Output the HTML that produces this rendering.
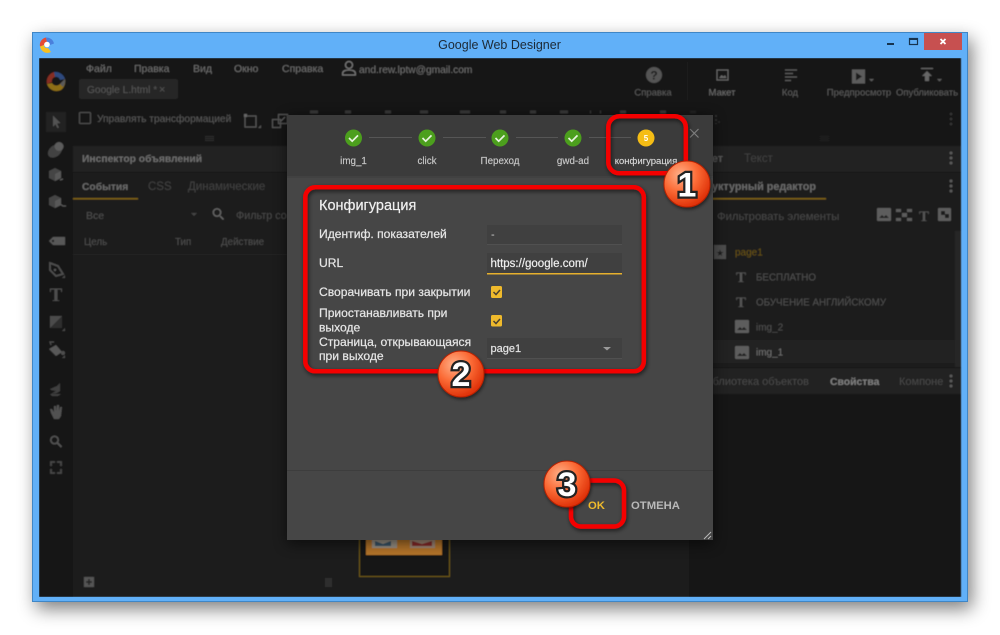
<!DOCTYPE html>
<html><head><meta charset="utf-8"><style>
html,body{margin:0;padding:0;background:#fff;width:1000px;height:635px;overflow:hidden}
svg{display:block}
text{font-family:"Liberation Sans",sans-serif;font-size:11px;fill:#666}
.m{fill:#6e6e6e;font-size:10.5px}
.d{fill:#5c5c5c;font-size:9.5px;text-anchor:middle}
.b{font-weight:bold}
.l{fill:#e6e6e6;font-size:12.1px;stroke:#e6e6e6;stroke-width:.22px}
.s{fill:#c8c8c8;font-size:9.8px;text-anchor:middle;stroke:#c8c8c8;stroke-width:.15px}
.dg{font-size:34px;font-weight:bold;fill:#fff;stroke:#222;stroke-width:4.5px;paint-order:stroke;text-anchor:middle}
.rb{fill:none;stroke:#f40000;stroke-width:4.5px}
.ser{font-family:"Liberation Serif",serif;font-weight:bold;text-anchor:middle}
</style></head><body>
<svg width="1000" height="635" viewBox="0 0 1000 635" xmlns="http://www.w3.org/2000/svg">
<defs>
<filter id="ws" x="-10%" y="-10%" width="120%" height="125%"><feGaussianBlur stdDeviation="9"/></filter>
<filter id="soft" x="0" y="0" width="100%" height="100%"><feGaussianBlur stdDeviation=".45"/></filter>
<filter id="ds" x="-10%" y="-10%" width="120%" height="120%"><feGaussianBlur stdDeviation="7"/></filter>
<filter id="rs" x="-20%" y="-20%" width="140%" height="140%"><feDropShadow dx="1" dy="2" stdDeviation="2" flood-color="#000" flood-opacity=".6"/></filter>
<filter id="bs" x="-20%" y="-20%" width="140%" height="140%"><feDropShadow dx="1" dy="2" stdDeviation="1.5" flood-color="#000" flood-opacity=".5"/></filter>
<radialGradient id="bg" cx="35%" cy="30%" r="75%"><stop offset="0" stop-color="#ffb088"/><stop offset=".5" stop-color="#fb6a35"/><stop offset="1" stop-color="#dc2c04"/></radialGradient>
<g id="img"><rect width="14" height="13" rx="1" fill="#5d5d5d"/><path d="M2 10l3-3 2 2 2-2 3 3z" fill="#1e1e1e"/></g>
<g id="vd"><circle cx="0" cy="-5" r="1.5" fill="#5a5a5a"/><circle cx="0" cy="0" r="1.5" fill="#5a5a5a"/><circle cx="0" cy="5" r="1.5" fill="#5a5a5a"/></g>
<g id="ok"><circle r="8.5" fill="#4c9f1d"/><path d="M-4.5 0l3.2 3.2 5.8-5.8" fill="none" stroke="#e8f3df" stroke-width="1.7"/></g>
</defs>

<!-- window -->
<rect x="36" y="39" width="936" height="570" fill="#000" opacity=".5" filter="url(#ws)"/>
<rect x="32.500" y="32.500" width="935" height="569" fill="#61b0f8" stroke="#3f86c6"/>

<!-- titlebar -->
<text x="499.500" y="49" style="font-size:12.5px;fill:#1d2a36;text-anchor:middle">Google Web Designer</text>
<g transform="translate(47,44.500)"><path d="M-7 2a7.500 7.500 0 0 1 6-9l1 4.500a3 3 0 0 0-3 3z" fill="#e54b35"/><path d="M-1-7a7.500 7.500 0 0 1 8 6l-4 1.500a3 3 0 0 0-3-3z" fill="#4a80dc"/><path d="M-7 2l4-1.500a3 3 0 0 0 4 3l3 4a7.500 7.500 0 0 1-11-5.500z" fill="#f7bf1f"/><circle r="2.800" fill="#fff"/></g>
<rect x="887" y="43" width="7" height="2" fill="#17344f"/>
<rect x="909.500" y="38.500" width="8" height="6" fill="none" stroke="#17344f" stroke-width="1.200"/><rect x="909" y="38" width="9" height="2" fill="#17344f"/>
<rect x="924" y="33" width="38" height="17" fill="#c75050"/>
<path d="M940.500 39l5 5m0-5l-5 5" stroke="#fff" stroke-width="1.800"/>

<g filter="url(#soft)">
<rect x="39" y="58" width="922" height="539" fill="#1b1b1b"/>
<!-- app top -->
<rect x="39" y="58" width="922" height="47" fill="#141414"/>
<rect x="39" y="105" width="922" height="41" fill="#171717"/>
<g transform="translate(56,81)" opacity=".6"><path d="M-9 3a10 10 0 0 1 7-12l1 5a4 4 0 0 0-3 5z" fill="#d2402c"/><path d="M-2-9a10 10 0 0 1 11 7l-5 1a4 4 0 0 0-5-3z" fill="#3f6fc3"/><path d="M-9 3l5-1a5 5 0 0 0 8 1l5-5a11 11 0 0 1-4 11 10 10 0 0 1-14-6z" fill="#e0aa1c"/><path d="M4 3l5-5a10 10 0 0 1-2 8z" fill="#8a8a8a"/></g>
<text class="m" x="86" y="72">Файл</text><text class="m" x="134" y="72">Правка</text><text class="m" x="193" y="72">Вид</text><text class="m" x="234" y="72">Окно</text><text class="m" x="282" y="72">Справка</text>
<circle cx="349" cy="65" r="3.500" fill="none" stroke="#777" stroke-width="1.300"/><path d="M342.700 75v-2c0-2 3-3 6.300-3s6.300 1 6.300 3v2z" fill="none" stroke="#777" stroke-width="1.300"/>
<text class="m" x="359" y="73" style="font-size:10.2px">and.rew.lptw@gmail.com</text>
<rect x="79" y="79" width="99" height="20" rx="2" fill="#262626"/>
<text x="87" y="93" style="fill:#565656;font-size:10.2px">Google L.html *</text><text x="159" y="93" style="fill:#555;font-size:11px">×</text>

<!-- top right -->
<circle cx="654" cy="75" r="8" fill="#555"/><text x="654" y="79.500" class="b" style="fill:#1a1a1a;font-size:12px;text-anchor:middle">?</text>
<text class="d" x="653" y="95.500">Справка</text>
<rect x="687" y="62" width="1" height="38" fill="#1e1e1e"/>
<rect x="717" y="70" width="11" height="10" fill="none" stroke="#666" stroke-width="1.200"/><path d="M719 78l2.500-3 2 1.500 1.500-1.500 1.500 3z" fill="#666"/>
<text class="d" x="722" y="95.500" style="fill:#707070">Макет</text>
<path d="M785 70h12M785 73.500h8M785 77h12M785 80.500h6" stroke="#5c5c5c" stroke-width="1.300"/>
<text class="d" x="790" y="95.500">Код</text>
<path d="M852 69.500h13v14h-13z" fill="#5c5c5c"/><path d="M856 72.500l6 4-6 4z" fill="#1a1a1a"/><path d="M869 79h5l-2.500 2.500z" fill="#5c5c5c"/>
<text class="d" x="859" y="95.500">Предпросмотр</text>
<path d="M921 68.500h12" stroke="#666" stroke-width="1.300"/><path d="M927 71l5 5h-3v5h-4v-5h-3z" fill="#666"/><path d="M937 79h5l-2.500 2.500z" fill="#5c5c5c"/>
<text class="d" x="927" y="95.500">Опубликовать</text>

<!-- toolbar -->
<rect x="79.500" y="112.500" width="11" height="11" rx="1" fill="none" stroke="#4e4e4e" stroke-width="1.300"/>
<text x="97" y="122" style="fill:#585858;font-size:10.2px">Управлять трансформацией</text>
<rect x="245" y="116" width="11" height="11" fill="none" stroke="#555" stroke-width="1.300"/><rect x="244" y="114" width="3" height="3" fill="#666"/><path d="M258 128l3-3v3z" fill="#555"/>
<path d="M278.500 114.500h9v9h-9zM272.500 119.500h8v8h-8z" fill="none" stroke="#555" stroke-width="1.200"/><path d="M281 121l4-4" stroke="#666"/>
<path d="M205 136.500h9M205 138.500h9M205 140.500h9" stroke="#333"/>
<path d="M820 136.500h9M820 138.500h9M820 140.500h9" stroke="#333"/>
<use href="#vd" x="951" y="119"/>
<path d="M310 112h8M345 112h6M385 112h6M420 112h8M460 112h10M500 112h6M530 112h6M560 112h8M590 112h1M600 112h1M620 112h6M660 112h6M690 112h6" stroke="#3a3a3a" stroke-width="3"/>
<path d="M716 115v9" stroke="#555" stroke-width="2" stroke-dasharray="2 2"/><circle cx="719" cy="122" r="1" fill="#555"/>

<!-- left toolbar -->
<rect x="39" y="105" width="34" height="492" fill="#191919"/>
<g opacity=".82">
<rect x="46" y="112" width="20" height="20" rx="1" fill="#262626"/>
<path d="M53 115.500l7.500 7.500-3.500.5 2 4-1.500.7-2-4-2.500 2.500z" fill="#606060"/>
<ellipse cx="55" cy="151" rx="8" ry="5.500" transform="rotate(-40 55 151)" fill="#4b4b4b"/><circle cx="59" cy="146.500" r="4.500" fill="#6a6a6a"/>
<path d="M49 171l6-3 6 3v7l-6 3-6-3z" fill="#4f4f4f"/><path d="M55 174l6-3v7l-6 3z" fill="#666"/><path d="M60 180l3-1" stroke="#777"/>
<path d="M49 198l6-3 6 3v7l-6 3-6-3z" fill="#4f4f4f"/><path d="M55 201l6-3v7l-6 3z" fill="#666"/><path d="M60 204l3 2h3" stroke="#666" stroke-width="1.300" fill="none"/>
<path d="M49 241l4-4h12v8h-12z" fill="#666"/><circle cx="53" cy="241" r="1.200" fill="#222"/>
<path d="M50 263l8 3 5 8-7 2-6-6z" fill="none" stroke="#5a5a5a" stroke-width="1.800"/><circle cx="55" cy="270" r="1.200" fill="#666"/><path d="M62 278l3-3v3z" fill="#555"/>
<text class="ser" x="56" y="301" style="font-size:19px;fill:#595959">T</text>
<rect x="50" y="316" width="12" height="12" fill="#565656"/><path d="M50 328l12-12v12z" fill="#333"/><path d="M62 331l3-3v3z" fill="#555"/>
<path d="M49 349l7-4 6 7-6 4z" fill="#666"/><path d="M51 345l-1-3 4 0" stroke="#5a5a5a" fill="none" stroke-width="1.200"/><circle cx="63" cy="353" r="2" fill="#5a5a5a"/><path d="M62 358l3-3v3z" fill="#555"/>
<path d="M50 389l7-3 3-3v8l-3 2-6 1 5-3-5-1z M50 394h11l-3 2h-6z" fill="#4a4a4a"/>
<path d="M51 413l-1-4 2 0 2 3 0-6 2 0 0 5 1-6 2 0 0 6 1-4 2 0-1 9-2 3h-5z" fill="#5e5e5e"/>
<circle cx="54.500" cy="440" r="3.700" fill="none" stroke="#5e5e5e" stroke-width="1.700"/><path d="M57.500 443l4 4" stroke="#5e5e5e" stroke-width="2"/>
<path d="M51 466v-4h4M57 462h4v4M61 469v4h-4M55 473h-4v-4" fill="none" stroke="#505050" stroke-width="1.800"/>
</g>
<rect x="73" y="228" width="1" height="342" fill="#1f1f1f"/>

<!-- left panel -->
<rect x="73" y="146" width="216" height="26" fill="#232323"/>
<rect x="73" y="172" width="216" height="1" fill="#151515"/>
<rect x="73" y="173" width="216" height="27" fill="#1f1f1f"/>
<rect x="73" y="198" width="65" height="1.500" fill="#7a5f16"/>
<text class="b" x="82" y="162" style="fill:#6e6e6e;font-size:10.3px">Инспектор объявлений</text>
<text class="b" x="82" y="190" style="fill:#6a6a6a;font-size:10.3px">События</text>
<text x="148" y="190" style="fill:#414141;font-size:11.5px">CSS</text>
<text x="188" y="190" style="fill:#414141;font-size:11.5px">Динамические</text>
<rect x="73" y="200" width="216" height="28" fill="#1c1c1c"/>
<text x="86" y="219" style="fill:#505050;font-size:10.5px">Все</text>
<path d="M191 213h6l-3 3z" fill="#444"/>
<circle cx="217" cy="212.500" r="3.700" fill="none" stroke="#666" stroke-width="1.400"/><path d="M220 216l3.500 3.500" stroke="#666" stroke-width="1.500"/>
<text x="236" y="219" style="fill:#4a4a4a;font-size:10.8px">Фильтр со</text>
<rect x="73" y="228" width="216" height="26" fill="#1a1a1a"/>
<text x="84" y="245" style="fill:#4f4f4f;font-size:9.800px">Цель</text>
<text x="175" y="245" style="fill:#4f4f4f;font-size:9.800px">Тип</text>
<text x="221" y="245" style="fill:#4f4f4f;font-size:9.800px">Действие</text>
<rect x="73" y="254" width="216" height="1" fill="#202020"/>
<rect x="73" y="569" width="240" height="1" fill="#1f1f1f"/>
<rect x="84" y="577" width="10" height="10" fill="#555"/><path d="M86 582h6M89 579v6" stroke="#222" stroke-width="1.500"/>
<rect x="325" y="578" width="7" height="9" fill="#2e2e2e"/>

<!-- thumbnail -->
<rect x="359.500" y="530" width="90" height="46.500" fill="#171717" stroke="#6f5a12"/>
<rect x="366" y="530" width="76" height="25" fill="#b5742a"/>
<rect x="372" y="536" width="25" height="12" fill="#9c9488"/><rect x="410" y="536" width="25" height="12" fill="#a08a78"/>
<path d="M375 541l8 3 8-3v5h-16z" fill="#37566a"/><path d="M412 541l10 3 10-3v5h-20z" fill="#8a2a2a"/>
<rect x="457" y="530" width="30" height="47" fill="#1e1e1e"/>

<!-- right panel -->
<rect x="689" y="105" width="272" height="492" fill="#151515" opacity=".6"/>
<rect x="689" y="146" width="272" height="26" fill="#232323"/>
<rect x="689" y="172" width="272" height="1" fill="#151515"/>
<rect x="689" y="173" width="272" height="27" fill="#1f1f1f"/>
<rect x="689" y="198" width="137" height="1.500" fill="#7a5f16"/>
<text class="b" x="723" y="162" style="fill:#595959;font-size:10.8px;text-anchor:end">Макет</text>
<text x="744" y="162" style="fill:#414141;font-size:11.500px">Текст</text>
<text class="b" x="816" y="190" style="fill:#6a6a6a;font-size:10.8px;text-anchor:end">Структурный редактор</text>
<use href="#vd" x="951" y="158"/><use href="#vd" x="951" y="186"/>
<rect x="689" y="200" width="272" height="31" fill="#1b1b1b"/>
<text x="717" y="220" style="fill:#474747;font-size:11.3px">Фильтровать элементы</text>
<use href="#img" x="877" y="208"/>
<path d="M896 209h5v3h-5zM907 209h5v3h-5zM902 213h5v4h-5zM896 218h5v3h-5zM907 218h5v3h-5z" fill="#5b5b5b"/>
<text class="ser" x="924" y="221" style="font-size:15px;fill:#555">T</text>
<rect x="938" y="208" width="13" height="13" rx="1" fill="#5d5d5d"/><rect x="941" y="211" width="4" height="4" fill="#1c1c1c"/><rect x="945" y="214" width="4" height="4" fill="#1c1c1c"/>
<rect x="689" y="231" width="266" height="136" fill="#1c1c1c"/>
<rect x="955" y="231" width="6" height="136" fill="#272727"/>
<rect x="689" y="340" width="266" height="23" fill="#242424"/>
<rect x="714" y="245" width="12" height="14" fill="#4d4d4d"/><text x="720" y="256" style="fill:#1c1c1c;font-size:9px;text-anchor:middle">★</text>
<text x="735" y="255.500" style="fill:#6a5413;font-size:10px">page1</text>
<text class="ser" x="741" y="282" style="font-size:15px;fill:#555">T</text>
<text x="756" y="280.500" style="fill:#505050;font-size:9.800px">БЕСПЛАТНО</text>
<text class="ser" x="741" y="307" style="font-size:15px;fill:#555">T</text>
<text x="756" y="305.500" style="fill:#505050;font-size:9.800px">ОБУЧЕНИЕ АНГЛИЙСКОМУ</text>
<use href="#img" x="735" y="320"/><text x="756" y="330.500" style="fill:#505050;font-size:10px">img_2</text>
<use href="#img" x="735" y="346"/><text x="756" y="355.500" style="fill:#707070;font-size:10px">img_1</text>
<rect x="689" y="368" width="272" height="26" fill="#212121"/>
<text x="809" y="385" style="fill:#484848;font-size:11px;text-anchor:end">Библиотека объектов</text>
<text class="b" x="830" y="385" style="fill:#808080;font-size:10.4px">Свойства</text>
<svg x="899" y="370" width="44" height="22"><text x="0" y="15" style="fill:#484848;font-size:11px">Компоненты</text></svg>
<use href="#vd" x="951" y="381"/>
</g>

<!-- dialog -->
<rect x="287" y="117" width="426" height="427" fill="#000" opacity=".55" filter="url(#ds)"/>
<rect x="287" y="115" width="426" height="425" fill="#464646"/>
<rect x="287" y="115" width="426" height="61" fill="#3b3b3b"/>
<rect x="287" y="176" width="426" height="2" fill="#414141"/>
<path d="M369 137.500h43M443 137.500h43M516 137.500h42M589 137.500h42" stroke="#565656"/>
<use href="#ok" x="353.500" y="138"/><use href="#ok" x="427" y="138"/><use href="#ok" x="500" y="138"/><use href="#ok" x="573" y="138"/>
<circle cx="646" cy="138" r="8.500" fill="#f5bd15"/><text x="646" y="141" style="fill:#fff;font-size:8px;text-anchor:middle;font-weight:bold">5</text>
<text class="s" x="353.500" y="164">img_1</text><text class="s" x="427" y="164">click</text><text class="s" x="500" y="164">Переход</text><text class="s" x="573" y="164">gwd-ad</text><text class="s" x="646" y="164" style="fill:#ddd;font-size:9.500px">конфигурация</text>
<path d="M690 129l8.500 8.500m0-8.500l-8.500 8.500" stroke="#7e7e7e" stroke-width="1.200"/>

<text x="319" y="210" style="fill:#f0f0f0;font-size:14.500px;stroke:#f0f0f0;stroke-width:.2px">Конфигурация</text>
<text class="l" x="319" y="238">Идентиф. показателей</text>
<text class="l" x="319" y="267">URL</text>
<text class="l" x="319" y="296">Сворачивать при закрытии</text>
<text class="l" x="319" y="317">Приостанавливать при</text>
<text class="l" x="319" y="331.500">выходе</text>
<text class="l" x="319" y="346">Страница, открывающаяся</text>
<text class="l" x="319" y="360">при выходе</text>

<rect x="487" y="225" width="135" height="19" fill="#404040"/><rect x="487" y="244" width="135" height="1" fill="#505050"/>
<text x="491" y="238" style="fill:#ccc;font-size:11px">-</text>
<rect x="487" y="253" width="135" height="20" fill="#404040"/><rect x="487" y="273" width="135" height="1.500" fill="#e6b02d"/>
<text x="490.500" y="267" style="fill:#f0f0f0;font-size:11.500px;stroke:#f0f0f0;stroke-width:.2px">https://google.com/</text>
<rect x="491" y="286" width="11" height="12" rx="1.500" fill="#efba2c"/><path d="M493.500 292l2.500 2.500 4-4.500" fill="none" stroke="#4a4030" stroke-width="1.500"/>
<rect x="491" y="315" width="11" height="11.500" rx="1.500" fill="#efba2c"/><path d="M493.500 321l2.500 2.500 4-4.500" fill="none" stroke="#4a4030" stroke-width="1.500"/>
<rect x="487" y="338" width="135" height="20" fill="#404040"/><rect x="487" y="358" width="135" height="1" fill="#505050"/>
<text x="490.500" y="352" style="fill:#e4e4e4;font-size:11px;stroke:#e4e4e4;stroke-width:.2px">page1</text>
<path d="M603 347h8l-4 3.500z" fill="#9a9a9a"/>

<rect x="287" y="470" width="426" height="1" fill="#3d3d3d"/>
<text class="b" x="588" y="509" style="fill:#efba2c;font-size:11.300px">OK</text>
<text class="b" x="631" y="509" style="fill:#b9b9b9;font-size:11.300px">ОТМЕНА</text>
<path d="M704 539l7-7M708 539l3-3" stroke="#bbb"/>

<!-- annotations -->
<rect class="rb" x="608.300" y="116.300" width="77.500" height="57" rx="11" filter="url(#rs)"/>
<rect class="rb" x="305.300" y="187.300" width="338.500" height="184" rx="10" filter="url(#rs)"/>
<rect class="rb" x="571" y="480.500" width="53" height="46" rx="10" filter="url(#rs)"/>

<g filter="url(#bs)"><circle cx="687" cy="184" r="23" fill="url(#bg)" stroke="#b92000"/></g>
<text class="dg" x="687" y="196.500">1</text>
<g filter="url(#bs)"><circle cx="461" cy="374" r="23" fill="url(#bg)" stroke="#b92000"/></g>
<text class="dg" x="461" y="386">2</text>
<g filter="url(#bs)"><circle cx="567" cy="484" r="23" fill="url(#bg)" stroke="#b92000"/></g>
<text class="dg" x="567" y="496">3</text>
</svg>
</body></html>
